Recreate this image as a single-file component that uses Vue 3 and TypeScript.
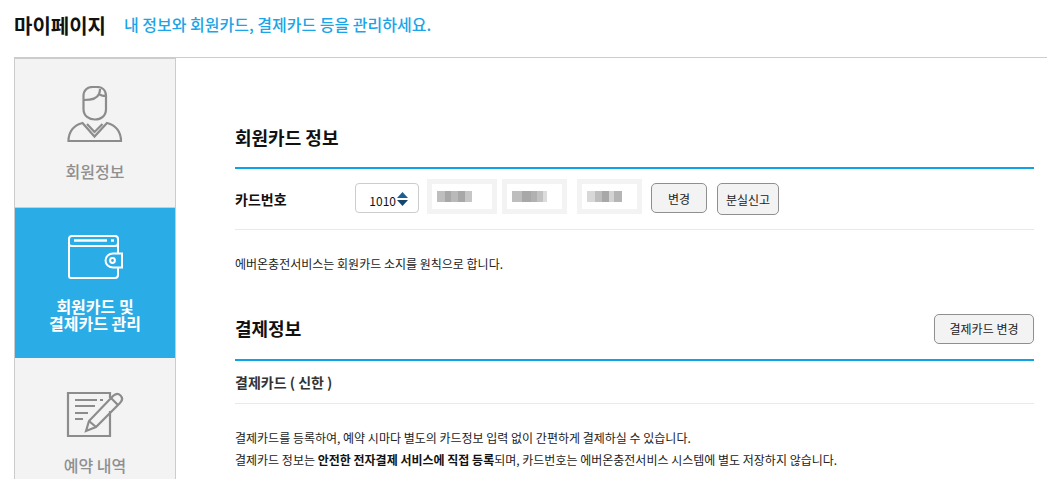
<script setup lang="ts">
const masks = [
  [
    { w: 8, o: 0.75 },
    { w: 6, o: 1 },
    { w: 7, o: 0.8 },
    { w: 7, o: 1 },
    { w: 7, o: 0.65 },
  ],
  [
    { w: 10, o: 0.75 },
    { w: 9, o: 1 },
    { w: 6, o: 0.9 },
    { w: 6, o: 0.7 },
    { w: 4, o: 0.4 },
  ],
  [
    { w: 8, o: 0.45 },
    { w: 7, o: 0.75 },
    { w: 7, o: 1 },
    { w: 5, o: 0.5 },
    { w: 8, o: 0.85 },
  ],
]
</script>

<template>
  <div class="page">
    <header class="head">
      <h1>마이페이지</h1>
      <p>내 정보와 회원카드, 결제카드 등을 관리하세요.</p>
    </header>
    <div class="body">
      <nav class="side">
        <a class="item">
          <svg class="ico" width="58" height="58" viewBox="0 0 58 58" fill="none" stroke="#8c8c8c" stroke-width="2.2">
            <path d="M17.500 10c0-6 4-9 9-9h4.500c5 0 9 3 9 9v13c0 7-5 10.500-11 10.500S17.500 30 17.500 23z" />
            <path d="M18 14c6 0 13-1 15-6 1-2 1-3 1-5M33 8c1 1 4 2 7 2" />
            <path d="M2.500 55c0-9 5-16 14-18l12 13.500L41 37c9 2 14 9 14 18z" />
            <path d="M21 38l7.500 8 8-8" />
          </svg>
          <span class="lab">회원정보</span>
        </a>
        <a class="item on">
          <svg class="ico wallet" width="56" height="44" viewBox="0 0 56 44" fill="none" stroke="#fff" stroke-width="2">
            <path d="M51 18V4c0-2-1-3-3-3H5C3 1 2 2 2 4v37c0 1 1 2 2 2h44c2 0 3-1 3-3v-7" />
            <path d="M2 9c0 1 1 2 3 2h43c2 0 3-1 3-3" />
            <path d="M7 5.500h33" stroke-width="2.400" />
            <path d="M44 5.500h3" stroke-width="2.400" />
            <path d="M46 18.500h9v14h-9c-4 0-7.500-3-7.500-7s3.500-7 7.500-7z" />
            <circle cx="45.500" cy="25.500" r="2.400" />
          </svg>
          <span class="lab">회원카드 및<br />결제카드 관리</span>
        </a>
        <a class="item">
          <svg class="ico" width="58" height="46" viewBox="0 0 58 46" fill="none" stroke="#8c8c8c" stroke-width="2.200">
            <path d="M44 20v25H2V2h42v5" />
            <path d="M9 9h22M34 9h3" />
            <path d="M9 15h20M9 22h13M9 28h8" />
            <path d="M20 40l3-10L47 5c2-2 5-3 7.500-.5s1.500 5.500-.5 7.500L30 36z" />
            <path d="M23 30l7 6M45 7l7 7" />
          </svg>
          <span class="lab">예약 내역</span>
        </a>
      </nav>
      <main class="main">
        <section class="sec-one">
          <div class="sec-head">
            <h2>회원카드 정보</h2>
          </div>
          <div class="row">
            <strong class="row-label">카드번호</strong>
            <div class="pick">
              <span>1010</span>
              <svg width="11" height="14" viewBox="0 0 11 14">
                <path d="M5.500 0l5.500 6H0z" fill="#1f5f8f" />
                <path d="M5.500 14L0 8h11z" fill="#14466e" />
              </svg>
            </div>
            <div v-for="(m, i) in masks" :key="i" class="mask" :class="{ wide: i === 0 }">
              <i v-for="(c, j) in m" :key="j" :style="{ width: c.w + 'px', opacity: c.o }" />
            </div>
            <button class="btn change">변경</button>
            <button class="btn lost">분실신고</button>
          </div>
          <p class="note">에버온충전서비스는 회원카드 소지를 원칙으로 합니다.</p>
        </section>
        <section class="sec-two">
          <div class="sec-head">
            <h2>결제정보</h2>
            <button class="btn pay">결제카드 변경</button>
          </div>
          <div class="card-name">결제카드 ( 신한 )</div>
          <p class="desc">결제카드를 등록하여, 예약 시마다 별도의 카드정보 입력 없이 간편하게 결제하실 수 있습니다.</p>
          <p class="desc">결제카드 정보는 <b>안전한 전자결제 서비스에 직접 등록</b>되며, 카드번호는 에버온충전서비스 시스템에 별도 저장하지 않습니다.</p>
        </section>
      </main>
    </div>
  </div>
</template>

<style>
html,
body {
  margin: 0;
  background: #fff;
  overflow: hidden;
}
</style>

<style scoped>
.page {
  width: 1047px;
  height: 479px;
  overflow: hidden;
  font-family: "Noto Sans CJK KR", "Noto Sans", sans-serif;
  color: #111;
}
.head {
  height: 57px;
  margin-left: 14px;
  border-bottom: 1px solid #ccc;
  display: flex;
  align-items: flex-start;
}
.head h1 {
  margin: 11px 0 0;
  font-size: 20px;
  line-height: 30px;
  font-weight: 700;
  color: #111;
}
.head p {
  margin: 10px 0 0 18px;
  font-size: 16px;
  line-height: 28px;
  font-weight: 500;
  color: #1ba5e8;
}
.body {
  display: flex;
  align-items: flex-start;
  padding-left: 14px;
}
.side {
  width: 160px;
  flex: none;
  border-top: 1px solid #ccc;
  border-left: 1px solid #ccc;
  border-right: 1px solid #ccc;
  background: #f3f3f3;
}
.item {
  display: flex;
  flex-direction: column;
  align-items: center;
  height: 150px;
  color: #8f8f8f;
  font-size: 16px;
  font-weight: 500;
  text-align: center;
  line-height: 17px;
}
.item:first-child {
  height: 149px;
  border-bottom: 1px solid #ccc;
  box-sizing: border-box;
}
.item:first-child .ico {
  margin-top: 27px;
}
.item:first-child .lab {
  margin-top: 19px;
}
.item:last-child .ico {
  margin-top: 33px;
}
.item:last-child .lab {
  margin-top: 20px;
}
.on {
  background: #2aace6;
  color: #fff;
  height: 150px;
}
.wallet {
  margin-top: 27px;
}
.on .lab {
  margin-top: 19px;
  font-weight: 700;
}
.main {
  flex: 1;
  padding: 0 13px 0 59px;
  min-width: 0;
}
.sec-one {
  padding-top: 62px;
}
.sec-head {
  display: flex;
  justify-content: space-between;
  align-items: center;
  height: 47px;
  border-bottom: 2px solid #0ea2e6;
}
.sec-head h2 {
  margin: 0;
  font-size: 18px;
  font-weight: 700;
  line-height: 32px;
  color: #111;
  position: relative;
  top: -7px;
}
.sec-two .sec-head h2 {
  top: -8px;
}
.row {
  display: flex;
  align-items: flex-start;
  height: 60px;
  border-bottom: 1px solid #e9e9e9;
}
.row-label {
  width: 120px;
  margin-top: 19px;
  font-size: 14px;
  line-height: 22px;
  font-weight: 700;
}
.pick {
  width: 64px;
  height: 30px;
  margin-top: 14px;
  box-sizing: border-box;
  border: 1px solid #ccc;
  border-radius: 4px;
  display: flex;
  align-items: center;
  justify-content: flex-end;
  padding: 2px 10px 0 0;
  gap: 1px;
  font-size: 12px;
  color: #111;
}
.pick span {
  font-family: "Noto Sans CJK KR", sans-serif;
  line-height: 14px;
  padding-top: 3px;
}
.mask {
  width: 65px;
  height: 35px;
  margin: 10px 0 0 10px;
  box-sizing: border-box;
  border: 5px solid #f3f3f3;
  display: flex;
  align-items: center;
  padding-left: 5px;
}
.mask.wide {
  width: 70px;
  margin-left: 8px;
  margin-right: -5px;
}
.mask i {
  display: block;
  height: 11px;
  background: #a8a8a8;
}
.btn {
  margin: 0;
  font-family: inherit;
  font-size: 12px;
  color: #222;
  background: #f3f3f3;
  border: 1px solid #8f8f8f;
  border-radius: 5px;
  padding: 0;
}
.change {
  width: 56px;
  height: 30px;
  margin: 14px 0 0 9px;
}
.lost {
  width: 62px;
  height: 32px;
  margin: 14px 0 0 10px;
}
.note {
  margin: 24px 0 0;
  font-size: 12px;
  line-height: 20px;
  color: #222;
}
.sec-two {
  padding-top: 38px;
}
.pay {
  width: 100px;
  height: 30px;
  position: relative;
  top: -7px;
}
.card-name {
  height: 42px;
  line-height: 42px;
  font-size: 14px;
  font-weight: 700;
  color: #333;
  border-bottom: 1px solid #e9e9e9;
}
.desc {
  margin: 0;
  font-size: 12px;
  line-height: 22px;
  color: #222;
}
.card-name + .desc {
  margin-top: 23px;
}
.desc b {
  font-weight: 700;
  color: #111;
}
</style>
